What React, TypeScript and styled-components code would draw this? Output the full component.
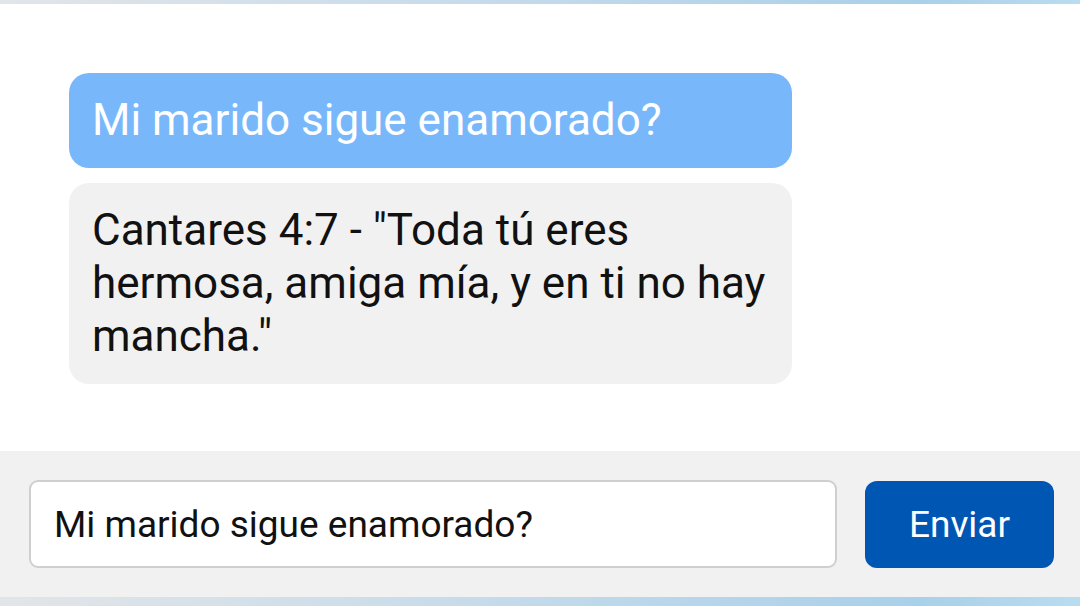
import React from "react";
import styled, { createGlobalStyle } from "styled-components";

const Global = createGlobalStyle`
  html, body { margin: 0; padding: 0; background: #ffffff; }
  body { font-family: Roboto, "Noto Sans", Arial, sans-serif; }
  * { box-sizing: border-box; }
`;

const Page = styled.div`
  width: 1080px;
  height: 606px;
  display: flex;
  flex-direction: column;
  background: #ffffff;
  overflow: hidden;
`;

const EdgeBar = styled.div<{ $h: number }>`
  height: ${(p) => p.$h}px;
  flex: none;
  background: linear-gradient(90deg, #e2e5e8 0%, #c9dceb 40%, #a9d0ea 85%, #b9dcf0 100%);
`;

const Chat = styled.div`
  flex: 1;
  display: flex;
  flex-direction: column;
  gap: 15px;
  padding: 69px 288px 0 69px;
`;

const Bubble = styled.div<{ $user?: boolean }>`
  border-radius: 20px;
  padding: 21px 23px;
  font-size: 44px;
  line-height: 53px;
  background: ${(p) => (p.$user ? "#78b8fa" : "#f1f1f1")};
  color: ${(p) => (p.$user ? "#ffffff" : "#111111")};
`;

const Footer = styled.div`
  height: 146px;
  flex: none;
  background: #f1f1f1;
  display: flex;
  align-items: center;
  gap: 28px;
  padding: 0 26px 0 29px;
`;

const Input = styled.input`
  flex: 1;
  height: 88px;
  border: 2px solid #cfcfcf;
  border-radius: 9px;
  background: #ffffff;
  padding: 0 23px;
  font-family: Roboto, "Noto Sans", Arial, sans-serif;
  font-size: 37px;
  color: #111111;
  outline: none;
`;

const SendButton = styled.button`
  width: 189px;
  height: 87px;
  border: none;
  border-radius: 12px;
  background: #0056b3;
  color: #ffffff;
  font-family: Roboto, "Noto Sans", Arial, sans-serif;
  font-size: 37px;
  cursor: pointer;
`;

export default function App() {
  return (
    <>
      <Global />
      <Page>
        <EdgeBar $h={4} />
        <Chat>
          <Bubble $user>Mi marido sigue enamorado?</Bubble>
          <Bubble>
            Cantares 4:7 - "Toda tú eres hermosa, amiga mía, y en ti no hay mancha."
          </Bubble>
        </Chat>
        <Footer>
          <Input defaultValue="Mi marido sigue enamorado?" />
          <SendButton>Enviar</SendButton>
        </Footer>
        <EdgeBar $h={9} />
      </Page>
    </>
  );
}
